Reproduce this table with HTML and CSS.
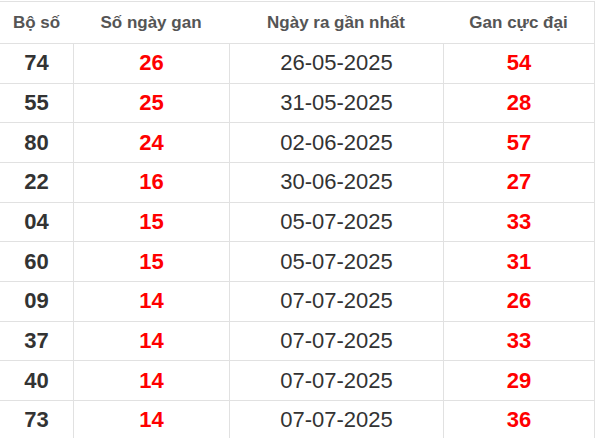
FILE: index.html
```html
<!DOCTYPE html>
<html lang="vi">
<head>
<meta charset="utf-8">
<title>Gan</title>
<link rel="stylesheet" href="styles.css">
</head>
<body>
<table class="gan-table">
  <colgroup>
    <col class="c1"><col class="c2"><col class="c3"><col class="c4">
  </colgroup>
  <thead>
    <tr><th>Bộ số</th><th>Số ngày gan</th><th>Ngày ra gần nhất</th><th>Gan cực đại</th></tr>
  </thead>
  <tbody>
    <tr><td class="num">74</td><td class="red">26</td><td class="date">26-05-2025</td><td class="red">54</td></tr>
    <tr><td class="num">55</td><td class="red">25</td><td class="date">31-05-2025</td><td class="red">28</td></tr>
    <tr><td class="num">80</td><td class="red">24</td><td class="date">02-06-2025</td><td class="red">57</td></tr>
    <tr><td class="num">22</td><td class="red">16</td><td class="date">30-06-2025</td><td class="red">27</td></tr>
    <tr><td class="num">04</td><td class="red">15</td><td class="date">05-07-2025</td><td class="red">33</td></tr>
    <tr><td class="num">60</td><td class="red">15</td><td class="date">05-07-2025</td><td class="red">31</td></tr>
    <tr><td class="num">09</td><td class="red">14</td><td class="date">07-07-2025</td><td class="red">26</td></tr>
    <tr><td class="num">37</td><td class="red">14</td><td class="date">07-07-2025</td><td class="red">33</td></tr>
    <tr><td class="num">40</td><td class="red">14</td><td class="date">07-07-2025</td><td class="red">29</td></tr>
    <tr><td class="num">73</td><td class="red">14</td><td class="date">07-07-2025</td><td class="red">36</td></tr>
  </tbody>
</table>
</body>
</html>
```
FILE: styles.css
```css
html, body {
  margin: 0;
  padding: 0;
  background: #fff;
}
body {
  font-family: "Liberation Sans", Arial, sans-serif;
  color: #333;
}
.gan-table {
  width: 595px;
  margin-top: 1px;
  table-layout: fixed;
  border-collapse: separate;
  border-spacing: 0;
}
.c1 { width: 73px; }
.c2 { width: 156px; }
.c3 { width: 214px; }
.c4 { width: 152px; }

.gan-table th,
.gan-table td {
  box-sizing: border-box;
  padding: 0;
  text-align: center;
  vertical-align: middle;
  border-bottom: 1px solid #e1e1e1;
}
.gan-table th {
  height: 43px;
  border-top: 1px solid #e1e1e1;
  font-size: 17px;
  font-weight: bold;
  color: #555;
}
.gan-table th:last-child,
.gan-table td:last-child {
  border-right: 1px solid #e1e1e1;
}
.gan-table td {
  height: 39.67px;
  font-size: 22px;
  line-height: 24px;
}
.gan-table td + td {
  border-left: 1px solid #e1e1e1;
}
.num {
  font-weight: bold;
  color: #333;
}
.red {
  font-weight: bold;
  color: #ff0000;
}
.date {
  font-weight: normal;
  color: #333;
}
```
